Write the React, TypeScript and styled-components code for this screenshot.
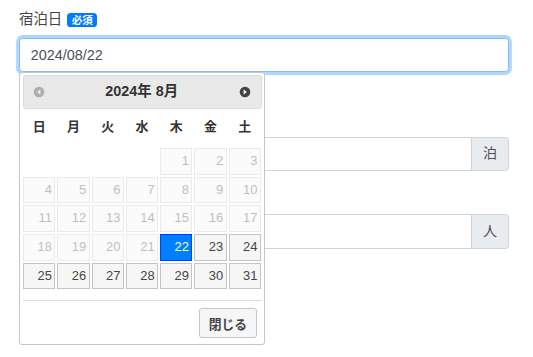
import React from "react";
import styled, { createGlobalStyle } from "styled-components";

const Global = createGlobalStyle`
  html, body { margin: 0; padding: 0; background: #fff; }
  body {
    font-family: "Liberation Sans", "Noto Sans CJK JP", Arial, sans-serif;
    font-size: 14.4px;
    line-height: 1.5;
    color: #212529;
  }
  *, *::before, *::after { box-sizing: border-box; }
`;

const Page = styled.div`
  width: 533px;
  height: 357px;
  overflow: hidden;
  padding: 9px 24px 0 19px;
`;

const FormGroup = styled.div<{ $mb: number }>`
  margin-bottom: ${(p) => p.$mb}px;
`;

const Label = styled.label`
  display: flex;
  align-items: center;
  gap: 5px;
  height: 21.6px;
  margin-bottom: 7.2px;
  font-size: 14.4px;
  color: #444;
`;

const Badge = styled.span`
  display: inline-block;
  margin-top: 1px;
  background: #007bff;
  color: #fff;
  font-size: 10.5px;
  font-weight: bold;
  line-height: 10.5px;
  padding: 2px 4.5px 1.5px;
  border-radius: 3.6px;
`;

const Field = styled.div`
  position: relative;
`;

const Input = styled.input<{ $focus?: boolean; $joined?: boolean }>`
  display: block;
  width: 100%;
  min-width: 0;
  flex: 1 1 auto;
  height: 34.4px;
  padding: 5.4px 10.8px;
  font-family: inherit;
  font-size: 14.4px;
  line-height: 1.5;
  color: #495057;
  background: #fff;
  border: 1px solid ${(p) => (p.$focus ? "#80bdff" : "#ced4da")};
  border-radius: ${(p) => (p.$joined ? "3.6px 0 0 3.6px" : "3.6px")};
  box-shadow: ${(p) => (p.$focus ? "0 0 0 2.9px rgba(0,123,255,.3)" : "none")};
  outline: none;
`;

const InputGroup = styled.div`
  display: flex;
  align-items: stretch;
`;

const Addon = styled.span`
  display: flex;
  flex: 0 0 38px;
  align-items: center;
  justify-content: center;
  width: 38px;
  margin-left: -1px;
  background: #e9ecef;
  border: 1px solid #ced4da;
  border-radius: 0 3.6px 3.6px 0;
  color: #495057;
  font-size: 14px;
`;

const Picker = styled.div`
  position: absolute;
  top: 100%;
  left: 0;
  z-index: 10;
  width: 246px;
  padding: 2px 2px 0 3px;
  background: #fff;
  border: 1px solid #c5c5c5;
  border-radius: 3px;
  color: #333;
`;

const Header = styled.div`
  display: flex;
  align-items: center;
  justify-content: space-between;
  height: 34px;
  padding: 0 3px 0 1.5px;
  background: #e9e9e9;
  border: 1px solid #ddd;
  border-radius: 3px;
`;

const NavBtn = styled.span<{ $disabled?: boolean }>`
  display: flex;
  align-items: center;
  justify-content: center;
  width: 26px;
  height: 26px;
  opacity: ${(p) => (p.$disabled ? 0.35 : 1)};
`;

const Title = styled.div`
  font-size: 14.4px;
  font-weight: bold;
  color: #333;
`;

const Grid = styled.div`
  display: grid;
  grid-template-columns: repeat(7, 1fr);
  column-gap: 1.8px;
  padding-right: 1px;
`;

const WeekRow = styled(Grid)`
  height: 36px;
  align-items: center;
`;

const WeekDay = styled.div`
  text-align: center;
  font-size: 12.96px;
  font-weight: bold;
  color: #333;
`;

const Days = styled(Grid)`
  margin-top: 3px;
  row-gap: 2px;
`;

const Cell = styled.div<{ $disabled?: boolean; $active?: boolean; $empty?: boolean }>`
  height: 26.6px;
  padding: 0 2.6px;
  text-align: right;
  font-size: 12.96px;
  line-height: 24.6px;
  border: 1px solid ${(p) => (p.$empty ? "transparent" : p.$active ? "#003eff" : "#c5c5c5")};
  background: ${(p) => (p.$empty ? "transparent" : p.$active ? "#007fff" : "#f6f6f6")};
  color: ${(p) => (p.$active ? "#fff" : "#454545")};
  opacity: ${(p) => (p.$disabled ? 0.35 : 1)};
`;

const ButtonPane = styled.div`
  display: flex;
  justify-content: flex-end;
  margin-top: 10.5px;
  padding: 0 2.9px;
  border-top: 1px solid #ddd;
`;

const CloseButton = styled.button`
  height: 30px;
  margin: 7.5px 2.6px 5.5px;
  padding: 0 8.5px;
  font-family: inherit;
  font-size: 12.8px;
  font-weight: bold;
  color: #454545;
  background: #f6f6f6;
  border: 1px solid #c5c5c5;
  border-radius: 3px;
`;

const CircleArrow = ({ dir }: { dir: "w" | "e" }) => (
  <svg width="12" height="12" viewBox="0 0 12 12">
    <circle cx="6" cy="6" r="5.3" fill="#444" />
    {dir === "w" ? (
      <polygon points="7.4,3.4 4.2,6 7.4,8.6" fill="#fff" />
    ) : (
      <polygon points="4.6,3.4 7.8,6 4.6,8.6" fill="#fff" />
    )}
  </svg>
);

const weekdays = ["日", "月", "火", "水", "木", "金", "土"];

export default function App() {
  const cells: { n?: number; disabled?: boolean; active?: boolean }[] = [];
  for (let i = 0; i < 4; i++) cells.push({});
  for (let d = 1; d <= 31; d++) {
    cells.push({ n: d, disabled: d < 22, active: d === 22 });
  }

  return (
    <>
      <Global />
      <Page>
        <FormGroup $mb={35.8}>
          <Label>
            宿泊日 <Badge>必須</Badge>
          </Label>
          <Field>
            <Input $focus defaultValue="2024/08/22" readOnly />
            <Picker>
              <Header>
                <NavBtn $disabled>
                  <CircleArrow dir="w" />
                </NavBtn>
                <Title>2024年 8月</Title>
                <NavBtn>
                  <CircleArrow dir="e" />
                </NavBtn>
              </Header>
              <WeekRow>
                {weekdays.map((w) => (
                  <WeekDay key={w}>{w}</WeekDay>
                ))}
              </WeekRow>
              <Days>
                {cells.map((c, i) =>
                  c.n === undefined ? (
                    <Cell key={i} $empty />
                  ) : (
                    <Cell key={i} $disabled={c.disabled} $active={c.active}>
                      {c.n}
                    </Cell>
                  )
                )}
              </Days>
              <ButtonPane>
                <CloseButton type="button">閉じる</CloseButton>
              </ButtonPane>
            </Picker>
          </Field>
        </FormGroup>

        <FormGroup $mb={14.4}>
          <Label aria-label="泊数" />
          <InputGroup>
            <Input $joined readOnly aria-label="泊数" />
            <Addon>泊</Addon>
          </InputGroup>
        </FormGroup>

        <FormGroup $mb={14.4}>
          <Label aria-label="人数" />
          <InputGroup>
            <Input $joined readOnly aria-label="人数" />
            <Addon>人</Addon>
          </InputGroup>
        </FormGroup>
      </Page>
    </>
  );
}
